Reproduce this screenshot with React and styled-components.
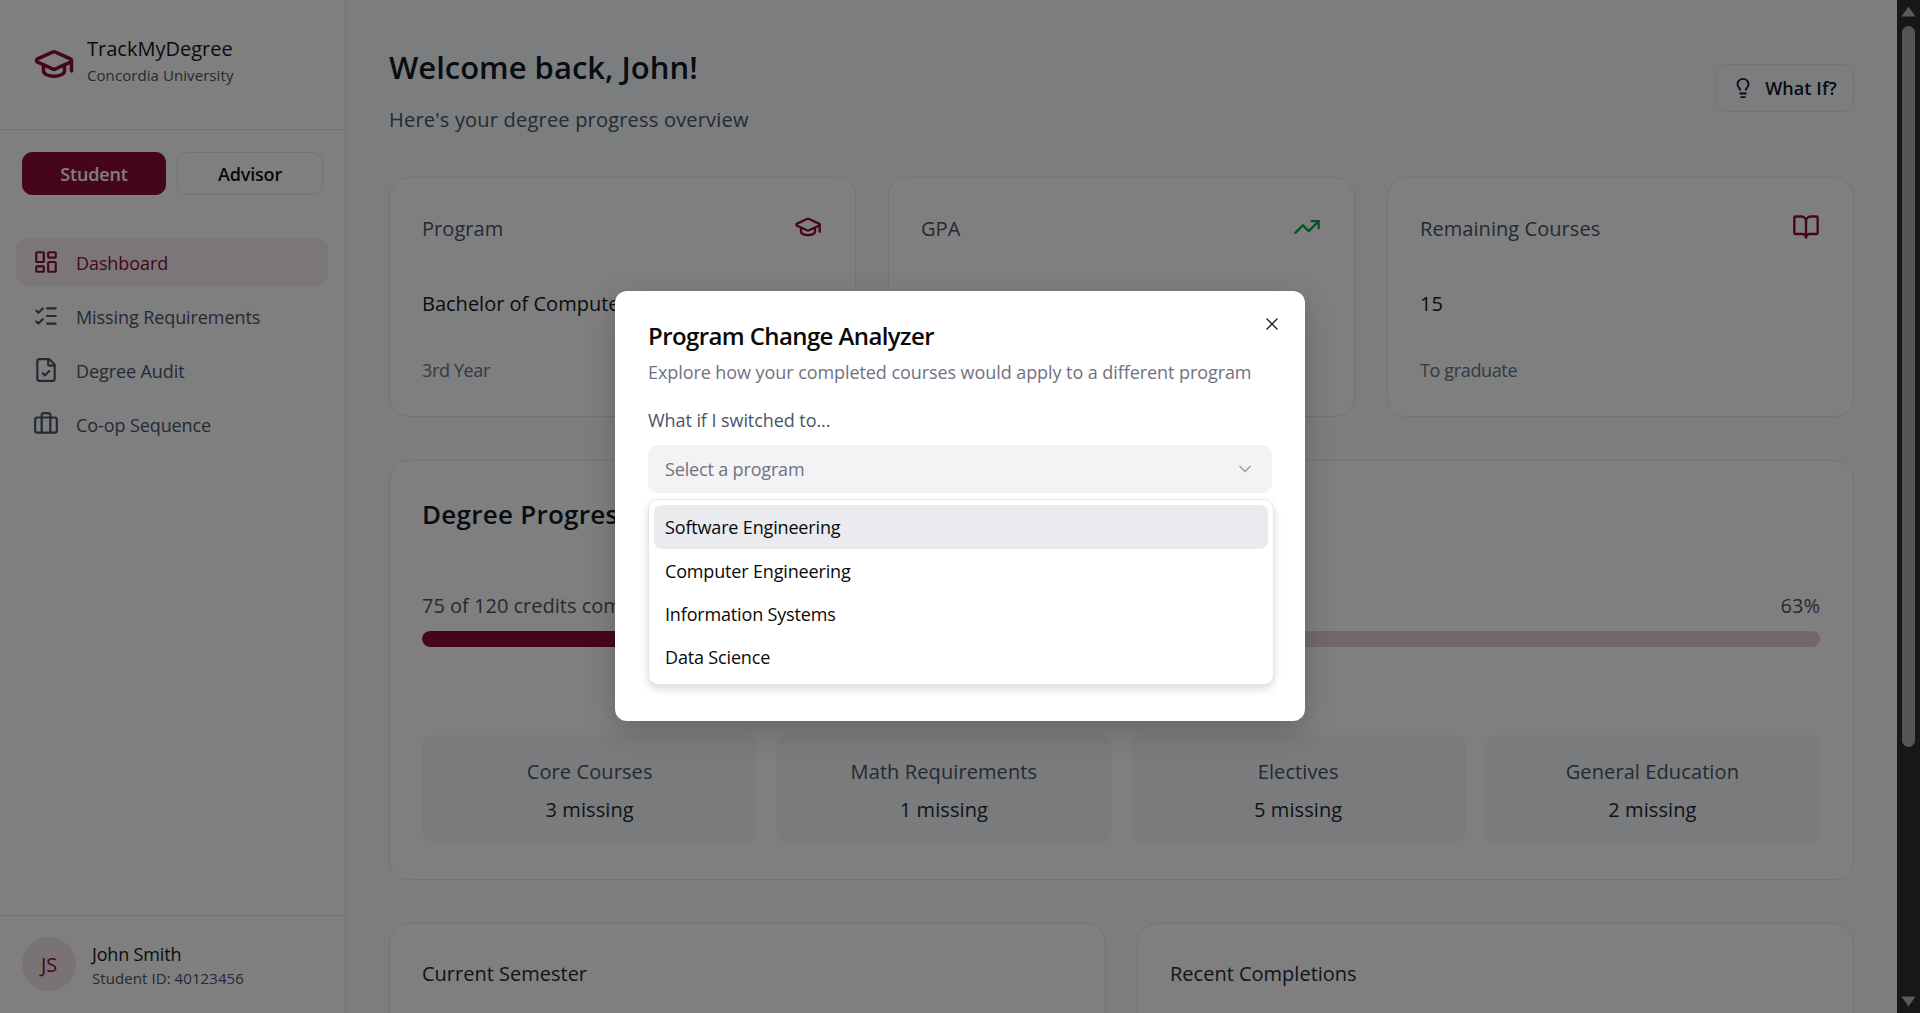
import styled, { createGlobalStyle } from 'styled-components';
import {
  GraduationCap, TrendingUp, BookOpen, Lightbulb, LayoutDashboard,
  ListChecks, FileCheck, Briefcase, ChevronDown, X,
} from 'lucide-react';

const maroon = '#8b0d37';
const font = '"Open Sans", "Noto Sans", sans-serif';

const Global = createGlobalStyle`
  html, body { margin: 0; height: 100%; overflow: hidden; }
  * { box-sizing: border-box; }
  body { font-family: ${font}; color: #111827; letter-spacing: -0.01em; }
`;

const Shell = styled.div`
  position: relative;
  display: flex;
  width: 100vw;
  height: 100vh;
  overflow: hidden;
`;
const Page = styled.div`
  flex: 1;
  display: flex;
  min-width: 0;
  background: #f8fafd;
`;

const Sidebar = styled.aside`
  width: 346px;
  flex: none;
  display: flex;
  flex-direction: column;
  background: #fff;
  border-right: 1px solid #e2e8f0;
`;
const Brand = styled.div`
  height: 130px;
  flex: none;
  display: flex;
  align-items: center;
  gap: 12px;
  padding: 0 0 2px 33px;
  border-bottom: 1px solid #e2e8f0;
  color: ${maroon};
`;
const BrandText = styled.div`
  padding-bottom: 7px;
`;
const BrandTitle = styled.div`
  font-size: 20px;
  line-height: 30px;
  letter-spacing: 0;
  color: #111827;
`;
const BrandSub = styled.div`
  font-size: 15px;
  line-height: 23px;
  letter-spacing: 0.005em;
  color: #475569;
`;
const RoleRow = styled.div`
  display: grid;
  grid-template-columns: 144px 146px;
  gap: 11px;
  padding: 22px 0 0 22px;
`;
const RoleButton = styled.div`
  height: 43px;
  display: flex;
  align-items: center;
  justify-content: center;
  border-radius: 10px;
  font-size: 18px;
  font-weight: 600;
  background: ${p => (p.$active ? maroon : '#fff')};
  color: ${p => (p.$active ? '#fff' : '#111')};
  border: 1px solid ${p => (p.$active ? maroon : '#e5e7eb')};
`;
const Nav = styled.nav`
  display: flex;
  flex-direction: column;
  gap: 6px;
  padding: 43px 17px 0 16px;
`;
const NavItem = styled.div`
  height: 48px;
  display: flex;
  align-items: center;
  gap: 17px;
  padding-left: 17px;
  border-radius: 12px;
  font-size: 18px;
  letter-spacing: -0.005em;
  color: ${p => (p.$active ? maroon : '#475569')};
  background: ${p => (p.$active ? '#f6edef' : 'transparent')};
`;
const NavLabel = styled.span`
  padding-top: 2px;
`;
const Profile = styled.div`
  margin-top: auto;
  height: 98px;
  flex: none;
  display: flex;
  align-items: flex-start;
  gap: 16px;
  padding: 21px 0 0 22px;
  border-top: 1px solid #e2e8f0;
`;
const Avatar = styled.div`
  width: 54px;
  height: 54px;
  border-radius: 50%;
  display: flex;
  align-items: center;
  justify-content: center;
  font-size: 20px;
  color: ${maroon};
  background: #f5e6e9;
`;
const ProfileName = styled.div`
  font-size: 18px;
  line-height: 24px;
  padding-top: 5px;
`;
const ProfileId = styled.div`
  margin-top: 2px;
  font-size: 15px;
  line-height: 20px;
  letter-spacing: 0.005em;
  color: #475569;
`;

const Main = styled.main`
  flex: 1;
  min-width: 0;
  padding: 0 43px;
  display: flex;
  flex-direction: column;
`;
const Header = styled.header`
  height: 177px;
  flex: none;
  display: flex;
  justify-content: space-between;
  padding-top: 45px;
`;
const Title = styled.h1`
  margin: 0;
  font-size: 31px;
  line-height: 45px;
  font-weight: 600;
  letter-spacing: 0;
`;
const Subtitle = styled.p`
  margin: 15px 0 0;
  font-size: 20px;
  line-height: 30px;
  letter-spacing: 0.01em;
  color: #475569;
`;
const WhatIf = styled.div`
  width: 139px;
  height: 48px;
  margin-top: 19px;
  display: flex;
  align-items: center;
  justify-content: center;
  gap: 11px;
  border: 1px solid #e5e7eb;
  border-radius: 12px;
  font-size: 18px;
  font-weight: 600;
  letter-spacing: 0.005em;
`;
const Card = styled.section`
  background: #fff;
  border: 1px solid #e2e8f0;
  border-radius: 20px;
  padding: 33px 33px 33px 32px;
  flex: none;
`;
const StatGrid = styled.div`
  display: grid;
  grid-template-columns: repeat(3, 1fr);
  gap: 32px;
  flex: none;
`;
const StatCard = styled(Card)`
  height: 240px;
  padding-top: 36px;
`;
const StatHead = styled.div`
  display: flex;
  justify-content: space-between;
  font-size: 20px;
  line-height: 30px;
  letter-spacing: 0.003em;
  color: #475569;
  svg { margin-top: -1px; }
`;
const StatValue = styled.div`
  margin-top: 45px;
  font-size: 20px;
  line-height: 30px;
  letter-spacing: 0;
  white-space: nowrap;
`;
const StatNote = styled.div`
  margin-top: 38px;
  font-size: 18px;
  line-height: 26px;
  letter-spacing: -0.02em;
  color: #64748b;
`;
const ProgressCard = styled(Card)`
  height: 420px;
  margin-top: 43px;
  padding-top: 34px;
`;
const CardTitle = styled.h2`
  margin: 0;
  font-size: 26px;
  line-height: 38px;
  font-weight: 600;
  letter-spacing: 0.01em;
`;
const ProgressHead = styled.div`
  display: flex;
  justify-content: space-between;
  margin-top: 58px;
  font-size: 20px;
  line-height: 30px;
  letter-spacing: 0;
  color: #475569;
`;
const Track = styled.div`
  height: 16px;
  margin-top: 10px;
  border-radius: 8px;
  overflow: hidden;
  background: #e7cfd7;
`;
const Fill = styled.div`
  height: 100%;
  border-radius: 8px;
  background: ${maroon};
`;
const MissingGrid = styled.div`
  display: grid;
  grid-template-columns: repeat(4, 1fr);
  gap: 19px;
  margin-top: 88px;
`;
const MissingTile = styled.div`
  height: 108px;
  padding-top: 4px;
  display: flex;
  flex-direction: column;
  align-items: center;
  justify-content: center;
  gap: 8px;
  border-radius: 12px;
  background: #f5f6f8;
  font-size: 20px;
  line-height: 30px;
  letter-spacing: 0.005em;
  color: #475569;
  strong { font-weight: 400; color: #1f2937; }
`;
const LowerGrid = styled.div`
  display: grid;
  grid-template-columns: 717px 1fr;
  gap: 31px;
  margin-top: 43px;
  flex: none;
`;
const LowerCard = styled(Card)`
  height: 300px;
  padding-top: 35px;
  font-size: 20px;
  line-height: 30px;
  letter-spacing: 0;
  color: #1f2937;
`;

const Rail = styled.div`
  width: 23px;
  flex: none;
  display: flex;
  flex-direction: column;
  align-items: center;
  background: #171717;
  color: #5a5a5a;
`;
const Thumb = styled.div`
  width: 13px;
  height: 721px;
  margin-top: 9px;
  border-radius: 7px;
  background: #555;
`;
const Arrow = styled.svg`
  width: 15px;
  height: 11px;
  flex: none;
  margin: ${p => p.$margin};
`;

const Backdrop = styled.div`
  position: absolute;
  top: 0;
  bottom: 0;
  left: 0;
  right: 23px;
  padding-left: 23px;
  display: flex;
  align-items: center;
  justify-content: center;
  background: rgba(0, 0, 0, 0.5);
`;
const Modal = styled.div`
  position: relative;
  width: 690px;
  height: 430px;
  margin-top: -1px;
  padding: 29px 33px 0;
  background: #fff;
  border-radius: 12px;
  box-shadow: 0 10px 30px rgba(0, 0, 0, 0.2);
`;
const Close = styled.div`
  position: absolute;
  top: 23px;
  right: 23px;
  display: flex;
  color: #222;
`;
const ModalTitle = styled.h3`
  margin: 0;
  font-size: 24px;
  line-height: 32px;
  font-weight: 600;
  letter-spacing: -0.025em;
  color: #0a0a0a;
`;
const ModalSub = styled.p`
  margin: 7px 0 0;
  font-size: 18px;
  line-height: 26px;
  letter-spacing: -0.004em;
  color: #717182;
`;
const Label = styled.div`
  margin-top: 22px;
  font-size: 18px;
  line-height: 26px;
  letter-spacing: -0.004em;
  color: #475569;
`;
const SelectWrap = styled.div`
  position: relative;
  margin-top: 12px;
`;
const SelectBox = styled.div`
  height: 48px;
  display: flex;
  align-items: center;
  justify-content: space-between;
  padding: 0 17px;
  border-radius: 10px;
  background: #f3f3f5;
  font-size: 18px;
  color: #717182;
`;
const Menu = styled.div`
  position: absolute;
  top: 54px;
  left: 0;
  right: -2px;
  height: 186px;
  padding: 5px;
  background: #fff;
  border: 1px solid #e5e7eb;
  border-radius: 10px;
  box-shadow: 0 4px 8px rgba(0, 0, 0, 0.15);
`;
const Option = styled.div`
  height: ${p => (p.$active ? '44px' : '43px')};
  display: flex;
  align-items: center;
  padding-left: 11px;
  border-radius: 8px;
  font-size: 18px;
  color: #0a0a0a;
  background: ${p => (p.$active ? '#e9ebef' : 'transparent')};
`;

const navItems = [
  { label: 'Dashboard', icon: LayoutDashboard, active: true },
  { label: 'Missing Requirements', icon: ListChecks },
  { label: 'Degree Audit', icon: FileCheck },
  { label: 'Co-op Sequence', icon: Briefcase },
];
const stats = [
  { label: 'Program', icon: GraduationCap, color: maroon, value: 'Bachelor of Computer Science', note: '3rd Year' },
  { label: 'GPA', icon: TrendingUp, color: '#16a34a', value: '3.45', note: 'Out of 4.30' },
  { label: 'Remaining Courses', icon: BookOpen, color: maroon, value: '15', note: 'To graduate' },
];
const missing = [
  ['Core Courses', '3 missing'],
  ['Math Requirements', '1 missing'],
  ['Electives', '5 missing'],
  ['General Education', '2 missing'],
];
const programs = ['Software Engineering', 'Computer Engineering', 'Information Systems', 'Data Science'];

export default function App() {
  return (
    <Shell>
      <Global />
      <Page>
        <Sidebar>
          <Brand>
            <GraduationCap size={42} strokeWidth={2} />
            <BrandText>
              <BrandTitle>TrackMyDegree</BrandTitle>
              <BrandSub>Concordia University</BrandSub>
            </BrandText>
          </Brand>
          <RoleRow>
            <RoleButton $active>Student</RoleButton>
            <RoleButton>Advisor</RoleButton>
          </RoleRow>
          <Nav>
            {navItems.map(({ label, icon: Icon, active }) => (
              <NavItem key={label} $active={active}>
                <Icon size={26} strokeWidth={2} />
                <NavLabel>{label}</NavLabel>
              </NavItem>
            ))}
          </Nav>
          <Profile>
            <Avatar>JS</Avatar>
            <div>
              <ProfileName>John Smith</ProfileName>
              <ProfileId>Student ID: 40123456</ProfileId>
            </div>
          </Profile>
        </Sidebar>
        <Main>
          <Header>
            <div>
              <Title>Welcome back, John!</Title>
              <Subtitle>Here's your degree progress overview</Subtitle>
            </div>
            <WhatIf>
              <Lightbulb size={22} />
              What If?
            </WhatIf>
          </Header>
          <StatGrid>
            {stats.map(({ label, icon: Icon, color, value, note }) => (
              <StatCard key={label}>
                <StatHead>
                  {label}
                  <Icon size={28} color={color} />
                </StatHead>
                <StatValue>{value}</StatValue>
                <StatNote>{note}</StatNote>
              </StatCard>
            ))}
          </StatGrid>
          <ProgressCard>
            <CardTitle>Degree Progress</CardTitle>
            <ProgressHead>
              <span>75 of 120 credits completed</span>
              <span>63%</span>
            </ProgressHead>
            <Track>
              <Fill style={{ width: '62.5%' }} />
            </Track>
            <MissingGrid>
              {missing.map(([name, count]) => (
                <MissingTile key={name}>
                  {name}
                  <strong>{count}</strong>
                </MissingTile>
              ))}
            </MissingGrid>
          </ProgressCard>
          <LowerGrid>
            <LowerCard>Current Semester</LowerCard>
            <LowerCard>Recent Completions</LowerCard>
          </LowerGrid>
        </Main>
      </Page>
      <Rail>
        <Arrow $margin="6px 0 0" viewBox="0 0 15 11">
          <path d="M7.5 0.5 L14.5 10.5 H0.5 Z" fill="currentColor" />
        </Arrow>
        <Thumb />
        <Arrow $margin="auto 0 6px" viewBox="0 0 15 11">
          <path d="M7.5 10.5 L14.5 0.5 H0.5 Z" fill="currentColor" />
        </Arrow>
      </Rail>
      <Backdrop>
        <Modal>
          <Close><X size={20} strokeWidth={1.6} /></Close>
          <ModalTitle>Program Change Analyzer</ModalTitle>
          <ModalSub>Explore how your completed courses would apply to a different program</ModalSub>
          <Label>What if I switched to...</Label>
          <SelectWrap>
            <SelectBox>
              Select a program
              <ChevronDown size={20} color="#a0a0ab" />
            </SelectBox>
            <Menu>
              {programs.map((name, i) => (
                <Option key={name} $active={i === 0}>{name}</Option>
              ))}
            </Menu>
          </SelectWrap>
        </Modal>
      </Backdrop>
    </Shell>
  );
}
